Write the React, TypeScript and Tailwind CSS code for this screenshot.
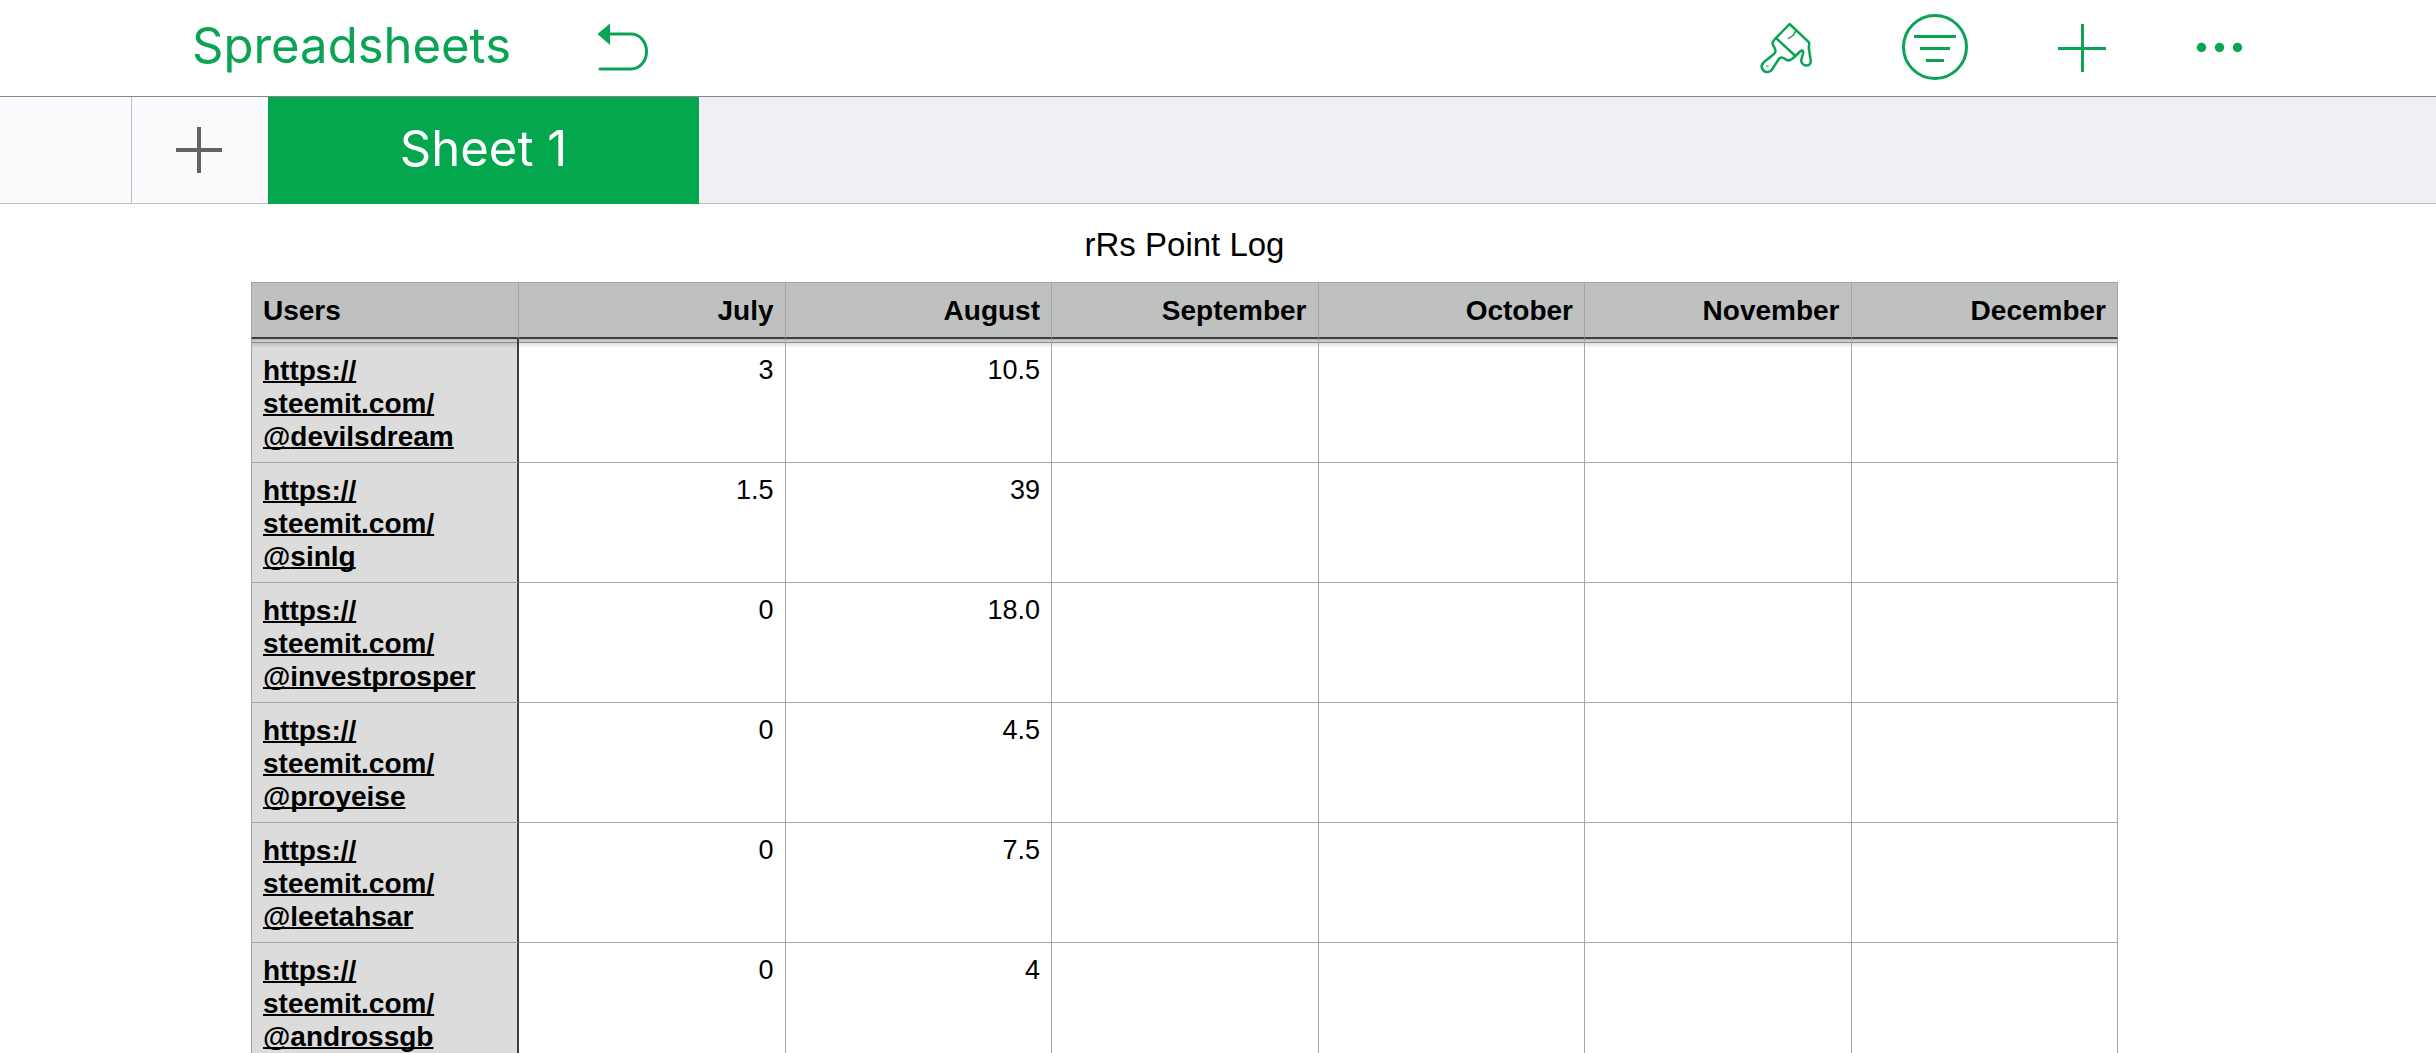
import clsx from 'clsx';

const months = ['July', 'August', 'September', 'October', 'November', 'December'];

const users = [
  { name: 'devilsdream', points: ['3', '10.5'] },
  { name: 'sinlg', points: ['1.5', '39'] },
  { name: 'investprosper', points: ['0', '18.0'] },
  { name: 'proyeise', points: ['0', '4.5'] },
  { name: 'leetahsar', points: ['0', '7.5'] },
  { name: 'androssgb', points: ['0', '4'] },
];

function UndoIcon() {
  return (
    <svg width="52" height="52" viewBox="0 0 52 52" fill="none">
      <path d="M12 12H34C43 12 49.500 20 49.500 29.500S43 47 34 47H3" stroke="currentColor" strokeWidth="3" strokeLinecap="round" />
      <path d="M0.500 12L13 1.500V23Z" fill="currentColor" />
    </svg>
  );
}

function BrushIcon() {
  return (
    <svg width="52" height="52" viewBox="0 0 52 52" fill="none" stroke="currentColor" strokeWidth="2.500" strokeLinejoin="round" strokeLinecap="round">
      <path d="M29.600 2L16 16C13 19 11.500 21 13.500 24C15.500 27 16.500 30 14 32L4 40C1 43 1 46 3.500 48.500C6 51 10 50.500 12 47.500L18.500 37.500C20 35 22.500 35 25 37C28 39.500 30 38.500 32 37L35.400 34L40 29.500C42.500 27.500 43.500 28.500 43 31.500L41.500 37C40.500 41 43.500 43.500 46.500 43.500C50 43.500 51.500 40.500 50.500 37L49 27C48.500 24.500 49.500 23 49 20.300Z" />
      <path d="M16 16L35.400 34" />
      <path d="M36 8.500L33 13.500L28.500 16.500" strokeWidth="1.500" />
      <circle cx="7.200" cy="44" r="0.800" strokeWidth="0.600" />
    </svg>
  );
}

function FilterIcon() {
  return (
    <svg width="68" height="68" viewBox="0 0 68 68" fill="none" stroke="currentColor" strokeWidth="3">
      <circle cx="34" cy="33" r="31.500" />
      <path d="M13 22.500H55M19 34.500H49M25 46.500H43" />
    </svg>
  );
}

function PlusIcon() {
  return (
    <svg width="48" height="48" viewBox="0 0 48 48" stroke="currentColor" strokeWidth="3">
      <path d="M0 24.500H48M24.500 0V48" />
    </svg>
  );
}

function MoreIcon() {
  return (
    <svg width="48" height="48" viewBox="0 0 48 48" fill="currentColor">
      <circle cx="6.500" cy="23.500" r="4.700" />
      <circle cx="24.500" cy="23.500" r="4.700" />
      <circle cx="42.500" cy="23.500" r="4.700" />
    </svg>
  );
}

function Toolbar() {
  return (
    <header className="flex h-[97px] shrink-0 items-center justify-between border-b border-[#85858d] bg-white pl-[192px] pr-[193px] text-[#0ba354]">
      <div className="flex items-center gap-[86px]">
        <button className="pb-1 font-['Inter',sans-serif] text-[49px] leading-[60px]">Spreadsheets</button>
        <button aria-label="Undo"><UndoIcon /></button>
      </div>
      <div className="flex items-center gap-[89px]">
        <button aria-label="Format"><BrushIcon /></button>
        <button aria-label="Organize"><FilterIcon /></button>
        <button aria-label="Insert"><PlusIcon /></button>
        <button aria-label="More"><MoreIcon /></button>
      </div>
    </header>
  );
}

function SheetTabs() {
  return (
    <nav className="flex h-[107px] shrink-0 border-b border-[#c0c0c4] bg-[#efeff5]">
      <div className="w-[132px] border-r border-[#c0c0c4] bg-[#fafafd]" />
      <button aria-label="Add sheet" className="flex w-[136px] items-center justify-center bg-[#fafafd] pr-0.5 text-[#636363]">
        <svg width="46" height="46" viewBox="0 0 46 46" stroke="currentColor" strokeWidth="4">
          <path d="M0 23H46M23 0V46" />
        </svg>
      </button>
      <button className="-mb-px w-[431px] bg-[#04a74e] pb-1 font-['Inter',sans-serif] text-[49px] leading-[60px] text-white">
        Sheet 1
      </button>
    </nav>
  );
}

// strip left under the floating header row
const headerShadow =
  'bg-[linear-gradient(to_bottom,#bcbcbc_0px,#d2d2d2_3px,#8c8c8c_3px,#8c8c8c_4px,rgb(0_0_0/0.12)_4px,transparent_9px)]';

export default function App() {
  return (
    <div className="flex h-screen flex-col overflow-hidden bg-white font-['Liberation_Sans',Arial,sans-serif] text-black">
      <Toolbar />
      <SheetTabs />
      <main className="min-h-0 flex-1 overflow-hidden pl-[251px] pr-[318px]">
        <h1 className="pb-[18px] pt-[21px] text-center text-[33px] leading-[39px]">rRs Point Log</h1>
        <table className="w-full table-fixed border-separate border-spacing-0 text-[28px] leading-[33px]">
          <thead>
            <tr className="bg-[#bfc1c0]">
              <th scope="col" className="w-[268px] border border-b-2 border-[#a2a4a3] border-b-[#3c3f3d] px-[11px] pb-[10px] pt-[11px] text-left">
                Users
              </th>
              {months.map((month) => (
                <th key={month} scope="col" className="border-b-2 border-r border-t border-[#a2a4a3] border-b-[#3c3f3d] px-[11px] pb-[10px] pt-[11px] text-right">
                  {month}
                </th>
              ))}
            </tr>
          </thead>
          <tbody>
            {users.map((user, i) => (
              <tr key={user.name} className="align-top">
                <th
                  scope="row"
                  className={clsx(
                    'border-b border-l border-r-2 border-[#a6a6a6] border-r-[#3c3f3d] bg-[#dcdcdc] px-[11px] pb-[9px] text-left',
                    i === 0 ? 'pt-[15px]' : 'pt-[11px]',
                    i === 0 && headerShadow
                  )}
                >
                  <a
                    href={`https://steemit.com/@${user.name}`}
                    className="underline decoration-2 underline-offset-1 [text-decoration-skip-ink:none]"
                  >
                    https://
                    <wbr />
                    steemit.com/
                    <wbr />@{user.name}
                  </a>
                </th>
                {months.map((month, m) => (
                  <td
                    key={month}
                    className={clsx(
                      'border-b border-r border-[#a6a6a6] px-[11px] pb-[9px] text-right text-[27px]',
                      i === 0 ? 'pt-[15px]' : 'pt-[11px]',
                      i === 0 && headerShadow
                    )}
                  >
                    {user.points[m]}
                  </td>
                ))}
              </tr>
            ))}
          </tbody>
        </table>
      </main>
    </div>
  );
}
